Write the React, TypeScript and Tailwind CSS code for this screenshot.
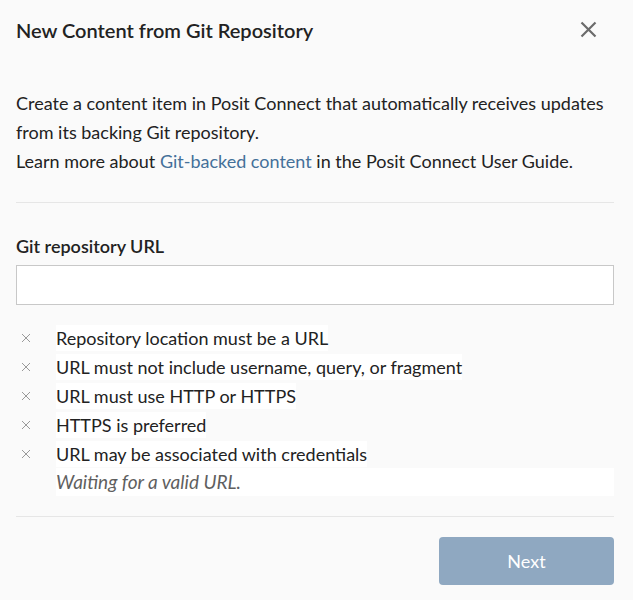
const checks = [
	'Repository location must be a URL',
	'URL must not include username, query, or fragment',
	'URL must use HTTP or HTTPS',
	'HTTPS is preferred',
	'URL may be associated with credentials',
];

const SmallX = () => (
	<svg width="10" height="10" viewBox="0 0 10 10" className="shrink-0">
		<path d="M1 1 L9 9 M9 1 L1 9" stroke="#9a9a9a" strokeWidth="1" />
	</svg>
);

export default function App() {
	return (
		<div
			className="w-[633px] h-[600px] bg-[#fafafa] text-[#222] pl-4 pr-[19px]"
			style={{ fontFamily: 'Lato, "Open Sans", sans-serif' }}
		>
			{/* header */}
			<div className="flex items-center justify-between h-[59px]">
				<h1 className="text-[20px] font-semibold leading-[28px]">New Content from Git Repository</h1>
				<button className="mr-[17px] text-[#666]">
					<svg width="17" height="17" viewBox="0 0 17 17">
						<path d="M1.5 1.5 L15.5 15.5 M15.5 1.5 L1.5 15.5" stroke="#6b6b6b" strokeWidth="2.2" />
					</svg>
				</button>
			</div>

			<div className="pt-[30px] pb-[26px] text-[18px] leading-[29px] border-b border-[#e6e6e6]">
				<p>Create a content item in Posit Connect that automatically receives updates from its backing Git repository.</p>
				<p>
					Learn more about <a className="text-[#447099]">Git-backed content</a> in the Posit Connect User Guide.
				</p>
			</div>

			<div className="pt-[31px] pb-[20px] border-b border-[#e6e6e6]">
				<label className="block text-[18px] font-semibold leading-[24px]">Git repository URL</label>
				<input className="mt-[7px] block w-full h-[40px] bg-white border border-[#c8c8c8] outline-none" />

				<ul className="mt-[18px] text-[18px]">
					{checks.map((c) => (
						<li key={c} className="flex items-center h-[29px]">
							<span className="w-[40px] flex pl-[5px] pt-[1px]">
								<SmallX />
							</span>
							<span className="bg-white leading-[26px]">{c}</span>
						</li>
					))}
					<li className="ml-[40px] h-[28px] bg-white italic text-[19px] text-[#5f5f5f] leading-[28px]">Waiting for a valid URL.</li>
				</ul>
			</div>

			<div className="flex justify-end pt-[20px]">
				<button className="w-[175px] h-[48px] rounded-[4px] bg-[#8fa8c1] text-white text-[18px]">Next</button>
			</div>
		</div>
	);
}
